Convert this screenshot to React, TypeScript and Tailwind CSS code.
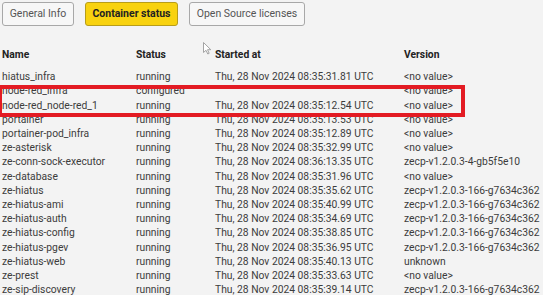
import React from "react";

const rows: [string, string, string, string][] = [
  ["hiatus_infra", "running", "Thu, 28 Nov 2024 08:35:31.81 UTC", "<no value>"],
  ["node-red_infra", "configured", "", "<no value>"],
  ["node-red_node-red_1", "running", "Thu, 28 Nov 2024 08:35:12.54 UTC", "<no value>"],
  ["portainer", "running", "Thu, 28 Nov 2024 08:35:13.53 UTC", "<no value>"],
  ["portainer-pod_infra", "running", "Thu, 28 Nov 2024 08:35:12.89 UTC", "<no value>"],
  ["ze-asterisk", "running", "Thu, 28 Nov 2024 08:35:32.99 UTC", "<no value>"],
  ["ze-conn-sock-executor", "running", "Thu, 28 Nov 2024 08:36:13.35 UTC", "zecp-v1.2.0.3-4-gb5f5e10"],
  ["ze-database", "running", "Thu, 28 Nov 2024 08:35:31.96 UTC", "<no value>"],
  ["ze-hiatus", "running", "Thu, 28 Nov 2024 08:35:35.62 UTC", "zecp-v1.2.0.3-166-g7634c362"],
  ["ze-hiatus-ami", "running", "Thu, 28 Nov 2024 08:35:40.99 UTC", "zecp-v1.2.0.3-166-g7634c362"],
  ["ze-hiatus-auth", "running", "Thu, 28 Nov 2024 08:35:34.69 UTC", "zecp-v1.2.0.3-166-g7634c362"],
  ["ze-hiatus-config", "running", "Thu, 28 Nov 2024 08:35:38.85 UTC", "zecp-v1.2.0.3-166-g7634c362"],
  ["ze-hiatus-pgev", "running", "Thu, 28 Nov 2024 08:35:36.95 UTC", "zecp-v1.2.0.3-166-g7634c362"],
  ["ze-hiatus-web", "running", "Thu, 28 Nov 2024 08:35:40.13 UTC", "unknown"],
  ["ze-prest", "running", "Thu, 28 Nov 2024 08:35:33.63 UTC", "<no value>"],
  ["ze-sip-discovery", "running", "Thu, 28 Nov 2024 08:35:39.14 UTC", "zecp-v1.2.0.3-166-g7634c362"],
];

export default function App() {
  return (
    <div
      className="relative w-[543px] h-[295px] overflow-hidden bg-[#f3f3f3] text-[#3c3c3c]"
      style={{ fontFamily: "Roboto, sans-serif" }}
    >
      <div className="flex gap-[11px] pl-[2px] pt-[2px]">
        <button className="h-[24px] w-[72px] rounded-[3px] border border-[#a8a8a8] bg-[#f7f7f7] text-[10.5px] text-[#555]">
          General Info
        </button>
        <button className="h-[24px] w-[93px] rounded-[3px] border border-[#b79d1a] bg-[#f8d20f] text-[10.5px] font-bold text-[#222]">
          Container status
        </button>
        <button className="h-[24px] w-[116px] rounded-[3px] border border-[#a8a8a8] bg-[#f7f7f7] text-[10.5px] text-[#555]">
          Open Source licenses
        </button>
      </div>

      <div className="pl-[2px] pt-[22px] text-[10.3px] leading-[14.2px]">
        <div className="grid grid-cols-[134px_79px_189px_1fr] font-bold text-[#222] mb-[8px]">
          <div>Name</div>
          <div>Status</div>
          <div>Started at</div>
          <div>Version</div>
        </div>
        {rows.map((r) => (
          <div key={r[0]} className="grid grid-cols-[134px_79px_189px_1fr] whitespace-nowrap">
            <div>{r[0]}</div>
            <div>{r[1]}</div>
            <div>{r[2]}</div>
            <div>{r[3]}</div>
          </div>
        ))}
      </div>

      <div className="absolute left-[-2px] top-[85px] w-[467px] h-[32px] border-[4px] border-[#e31b23]" />

      <svg className="absolute left-[203px] top-[42px]" width="9" height="13" viewBox="0 0 9 13">
        <path d="M0.5 0.5 L0.5 10.5 L3 8.3 L4.8 12 L6.2 11.3 L4.5 7.7 L7.8 7.7 Z" fill="#fff" stroke="#9a9a9a" strokeWidth="0.9" />
      </svg>
    </div>
  );
}
